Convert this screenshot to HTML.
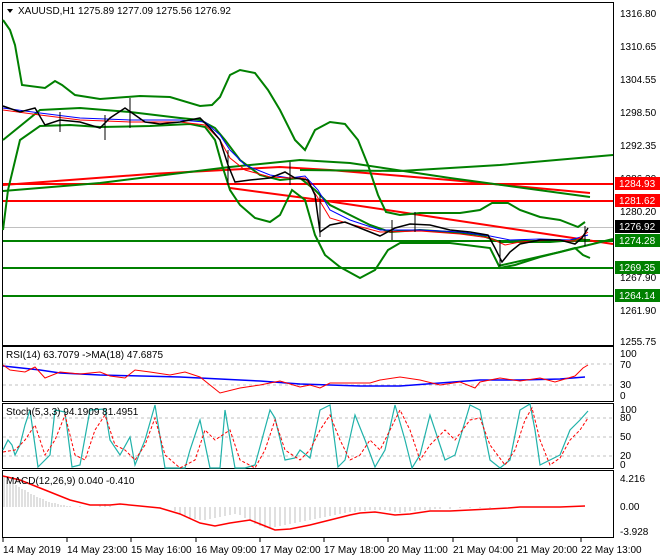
<!DOCTYPE html>
<html><head><meta charset="utf-8"><style>
html,body{margin:0;padding:0;background:#fff;width:660px;height:560px;overflow:hidden}
svg{display:block}
text{font-family:"Liberation Sans",sans-serif;font-size:10px;fill:#000}
</style></head><body>
<svg width="660" height="560" viewBox="0 0 660 560" xmlns="http://www.w3.org/2000/svg">
<rect width="660" height="560" fill="#fff"/>
<g fill="none" stroke="#000" stroke-width="1">
<rect x="2.5" y="2.5" width="611" height="343"/>
<rect x="2.5" y="346.5" width="611" height="55"/>
<rect x="2.5" y="403.5" width="611" height="65"/>
<rect x="2.5" y="470.5" width="611" height="67"/>
</g>
<polygon points="7,9 13,9 10,13" fill="#000"/>
<text x="18" y="14" font-size="10.5">XAUUSD,H1  1275.89 1277.09 1275.56 1276.92</text>

<line x1="3" y1="227.5" x2="613" y2="227.5" stroke="#c0c0c0"/>
<g stroke-width="2" fill="none">
<line x1="3" y1="184" x2="613" y2="184" stroke="#ff0000"/>
<line x1="3" y1="201" x2="613" y2="201" stroke="#ff0000"/>
<line x1="3" y1="241" x2="613" y2="241" stroke="#008000"/>
<line x1="3" y1="268" x2="613" y2="268" stroke="#008000"/>
<line x1="3" y1="296" x2="613" y2="296" stroke="#008000"/>
<polyline stroke="#ff0000" points="3,185 150,174 280,167 330,170 450,180 590,193"/>
<polyline stroke="#008000" points="3,191 100,183 230,167 300,160 350,163 450,178 590,197"/>
<polyline stroke="#008000" points="300,170 400,171 500,165 613,155"/>
<polyline stroke="#ff0000" points="230,188 320,200 420,215 520,230 613,244"/>
<polyline stroke="#008000" points="498,266 560,252 613,239"/>
<polyline stroke="#008000" points="3,20 10,30 15,45 22,85 45,88 55,81 62,85 75,95 100,99 140,96 170,97 200,106 212,105 220,97 230,75 240,70 255,73 268,90 280,110 295,140 305,150 315,130 330,122 345,124 358,140 368,165 378,195 386,212 400,215 420,213 460,213 480,210 492,203 508,203 520,210 540,217 560,220 578,227 585,222"/>
<polyline stroke="#008000" points="3,230 8,190 20,140 40,126 70,125 100,127 150,126 190,124 205,127 215,140 222,165 230,190 240,205 255,218 270,222 280,215 292,190 305,200 315,235 325,255 340,267 360,278 375,270 388,250 400,243 420,243 450,243 490,248 500,268 515,265 540,257 560,252 575,248 583,255 590,258"/>
<polyline stroke="#008000" points="3,140 40,110 80,108 130,112 180,118 200,120 215,128 225,140 240,160 260,175 280,180 300,178 315,190 330,205 350,215 370,225 390,232 420,230 450,232 480,235 500,242 520,242 550,242 575,240 590,240"/>
</g>
<polyline fill="none" stroke="#0000ff" stroke-width="1" points="3,108 40,113 80,118 130,120 180,120 205,122 220,135 230,150 245,165 270,175 290,178 305,176 318,190 330,210 350,220 380,230 420,230 460,232 490,236 510,240 540,239 570,240 588,235"/>
<polyline fill="none" stroke="#ff0000" stroke-width="1" points="3,110 40,115 80,120 130,122 180,122 205,125 220,140 230,158 245,170 270,177 290,178 305,178 318,198 330,218 350,224 380,232 420,231 460,234 490,238 505,245 520,242 550,240 575,241 588,232"/>
<polyline fill="none" stroke="#000" stroke-width="1.5" points="3,106 20,112 35,108 45,125 60,120 80,122 100,128 110,118 125,108 135,115 145,122 160,124 180,122 200,118 210,128 220,140 228,165 235,182 250,180 270,178 285,172 295,178 308,180 315,195 320,232 330,225 345,222 365,230 380,236 395,228 410,224 430,225 450,230 470,232 488,235 495,248 502,262 510,252 520,244 540,240 560,240 575,244 582,238 588,228"/>
<g stroke="#000" stroke-width="1">
<line x1="60" y1="112" x2="60" y2="132"/><line x1="105" y1="115" x2="105" y2="140"/><line x1="130" y1="98" x2="130" y2="128"/><line x1="228" y1="150" x2="228" y2="185"/><line x1="290" y1="162" x2="290" y2="185"/><line x1="320" y1="195" x2="320" y2="237"/><line x1="392" y1="220" x2="392" y2="240"/><line x1="415" y1="212" x2="415" y2="232"/><line x1="500" y1="240" x2="500" y2="266"/><line x1="585" y1="226" x2="585" y2="246"/>
</g>
<g>
<text x="620" y="17">1316.80</text>
<text x="620" y="50">1310.65</text>
<text x="620" y="83">1304.55</text>
<text x="620" y="116">1298.50</text>
<text x="620" y="149">1292.35</text>
<text x="620" y="182">1286.30</text>
<text x="620" y="215">1280.20</text>
<text x="620" y="281">1267.90</text>
<text x="620" y="314">1261.90</text>
<text x="620" y="345">1255.75</text>
<rect x="615" y="177" width="45" height="13" fill="#ff0000"/><text x="619" y="187" style="fill:#fff">1284.93</text>
<rect x="615" y="194" width="45" height="13" fill="#ff0000"/><text x="619" y="204" style="fill:#fff">1281.62</text>
<rect x="615" y="220" width="45" height="13" fill="#000"/><text x="619" y="230" style="fill:#fff">1276.92</text>
<rect x="615" y="234" width="45" height="13" fill="#008000"/><text x="619" y="244" style="fill:#fff">1274.28</text>
<rect x="615" y="261" width="45" height="13" fill="#008000"/><text x="619" y="271" style="fill:#fff">1269.35</text>
<rect x="615" y="289" width="45" height="13" fill="#008000"/><text x="619" y="299" style="fill:#fff">1264.14</text>
</g>

<g stroke="#c0c0c0" stroke-dasharray="3,3"><line x1="3" y1="364" x2="613" y2="364"/><line x1="3" y1="385" x2="613" y2="385"/></g>
<text x="6" y="358">RSI(14) 63.7079  -&gt;MA(18) 47.6875</text>
<polyline fill="none" stroke="#0000ff" stroke-width="1.5" points="3,366 40,370 60,373 100,375 180,377 220,379 260,381 300,384 360,386 400,386 440,383 480,380 520,380 560,379 585,377"/>
<polyline fill="none" stroke="#ff0000" points="3,365 10,370 25,372 35,367 45,378 60,372 80,374 100,372 110,376 125,378 135,370 150,372 170,375 185,372 200,377 220,393 240,388 260,385 280,381 300,387 310,385 320,388 330,383 350,383 370,383 380,380 400,377 420,380 440,385 460,382 475,388 480,382 500,378 520,381 540,378 555,382 575,376 583,368 588,365"/>
<g font-size="9"><text x="620" y="357">100</text><text x="620" y="368">70</text><text x="620" y="388">30</text><text x="620" y="399">0</text></g>

<g stroke="#c0c0c0" stroke-dasharray="3,3"><line x1="3" y1="418" x2="613" y2="418"/><line x1="3" y1="437" x2="613" y2="437"/><line x1="3" y1="456" x2="613" y2="456"/></g>
<polyline fill="none" stroke="#20b2aa" stroke-width="1.2" points="3,450 8,440 12,445 15,455 20,445 25,425 30,410 38,467 50,455 55,410 65,412 72,467 80,465 90,410 105,409 110,440 120,455 130,437 135,465 145,440 155,405 165,468 185,468 190,450 200,420 210,468 220,468 225,410 235,468 245,468 255,465 270,410 275,418 285,460 295,458 300,450 310,458 320,410 330,405 338,467 345,460 355,415 365,440 375,467 385,450 395,405 405,440 412,468 420,455 430,415 445,460 455,455 470,405 480,410 490,460 500,468 510,460 520,410 530,404 535,430 540,465 550,460 560,455 570,430 580,420 588,411"/>
<polyline fill="none" stroke="#ff0000" stroke-dasharray="3,2" points="3,452 15,450 25,440 35,425 45,455 55,440 65,415 75,455 85,460 95,430 105,415 115,445 125,450 135,460 145,445 155,418 165,455 180,468 195,460 205,430 215,440 230,430 240,460 255,468 265,450 275,420 285,450 300,460 310,450 320,430 330,415 340,440 350,460 360,455 370,440 380,450 390,430 400,410 410,430 420,460 430,445 445,430 455,440 470,420 480,418 490,445 505,465 515,450 525,420 532,408 540,440 550,465 560,458 570,440 580,430 588,418"/>
<text x="6" y="415">Stoch(5,3,3) 94.1909 81.4951</text>
<g font-size="9"><text x="620" y="413">100</text><text x="620" y="421">80</text><text x="620" y="440">50</text><text x="620" y="459">20</text><text x="620" y="468">0</text></g>

<g stroke="#c0c0c0" stroke-width="1">
<path d="M4,477V507M7,480V507M10,482V507M13,484V507M16,485V507M19,487V507M22,489V507M25,490V507M28,492V507M31,494V507M34,495V507M37,497V507M40,498V507M43,499V507M46,501V507M49,502V507M52,503V507M55,503V507M58,504V507M61,505V507M64,505V507M67,506V507M70,506V507M80,506V507M100,505V507M105,504V507M110,506V507M160,507V508M175,507V511M180,507V514M185,507V516M190,507V518M195,507V519M200,507V520M205,507V520M210,507V519M215,507V518M220,507V517M225,507V516M230,507V515M235,507V514M240,507V515M245,507V518M250,507V521M255,507V524M260,507V526M265,507V528M270,507V528M275,507V527M280,507V526M285,507V525M290,507V524M295,507V523M300,507V522M305,507V521M310,507V520M315,507V519M320,507V518M325,507V517M330,507V516M335,507V515M340,507V514M345,507V513M350,507V512M355,507V512M360,507V511M365,507V511M370,507V510M375,507V510M380,507V510M385,507V510M390,507V511M395,507V512M400,507V513M405,507V512M410,507V511M415,507V511M420,507V510M425,507V510M430,507V510M435,507V509M440,507V509M450,507V509M460,507V508M470,507V508M480,507V508M490,507V508"/>
</g>
<polyline fill="none" stroke="#ff0000" stroke-width="1.5" points="3,476 20,480 40,488 60,496 70,500 90,505 110,505 120,504 140,506 160,508 180,514 200,523 215,526 230,523 250,520 260,524 275,530 290,529 310,525 330,520 350,515 360,513 375,512 395,515 410,514 430,511 450,511 470,510 490,509 508,508 520,507 540,507 560,507 585,506"/>
<text x="6" y="484">MACD(12,26,9) 0.040 -0.410</text>
<g font-size="9"><text x="620" y="482">4.216</text><text x="620" y="510">0.00</text><text x="620" y="535">-3.928</text></g>

<g stroke="#000"><line x1="3" y1="538" x2="3" y2="542"/><line x1="67" y1="538" x2="67" y2="542"/><line x1="131" y1="538" x2="131" y2="542"/><line x1="196" y1="538" x2="196" y2="542"/><line x1="260" y1="538" x2="260" y2="542"/><line x1="324" y1="538" x2="324" y2="542"/><line x1="388" y1="538" x2="388" y2="542"/><line x1="453" y1="538" x2="453" y2="542"/><line x1="517" y1="538" x2="517" y2="542"/><line x1="581" y1="538" x2="581" y2="542"/></g>
<g font-size="9.5">
<text x="3" y="553">14 May 2019</text><text x="67" y="553">14 May 23:00</text><text x="131" y="553">15 May 16:00</text><text x="196" y="553">16 May 09:00</text><text x="260" y="553">17 May 02:00</text><text x="324" y="553">17 May 18:00</text><text x="388" y="553">20 May 11:00</text><text x="453" y="553">21 May 04:00</text><text x="517" y="553">21 May 20:00</text><text x="581" y="553">22 May 13:00</text>
</g>
</svg>
</body></html>
